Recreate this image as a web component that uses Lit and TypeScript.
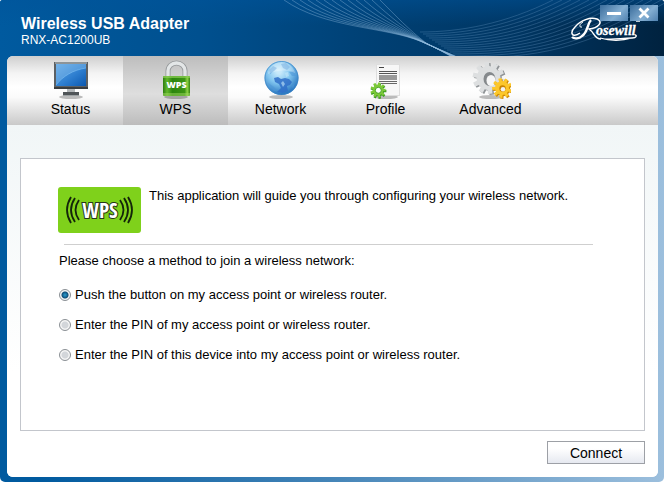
import { LitElement, html, css, svg } from "lit";
import { customElement, state } from "lit/decorators.js";

function gear(cx: number, cy: number, r: number, inner: number, teeth: number, turn = 0): string {
  const pts: string[] = [];
  const step = (Math.PI * 2) / teeth;
  const at = (a: number, rad: number) => `${(cx + Math.cos(a) * rad).toFixed(2)},${(cy + Math.sin(a) * rad).toFixed(2)}`;
  for (let i = 0; i < teeth; i++) {
    const a = i * step + turn;
    pts.push(at(a - step * 0.3, inner), at(a - step * 0.23, r), at(a + step * 0.23, r), at(a + step * 0.3, inner));
  }
  return pts.join(" ");
}

const shadow = svg`<ellipse cx="20" cy="38" rx="12" ry="2" fill="#000" opacity=".25"></ellipse>`;

const icons = {
  status: svg`
    <defs><linearGradient id="scr" x1="0" y1="0" x2="1" y2="1"><stop offset="0" stop-color="#64a8e4"/><stop offset=".55" stop-color="#2f7fd0"/><stop offset="1" stop-color="#0b58b0"/></linearGradient></defs>
    ${shadow}
    <rect x="3" y="3" width="34" height="27" fill="#5b6064"/>
    <rect x="4" y="3" width="32" height="2" fill="#8d9498"/>
    <rect x="5" y="5" width="30" height="22" fill="url(#scr)"/>
    <path d="M5 5 H35 V9 C22 11 12 17 5 26Z" fill="#8cc4f0" opacity=".4"/>
    <path d="M5 26 C12 17 22 11 35 9" fill="none" stroke="#7cc0f4" stroke-width=".6"/>
    <rect x="3" y="28" width="34" height="2" fill="#393d40"/>
    <rect x="16" y="30" width="8" height="3" fill="#b4b8ba"/>
    <rect x="12" y="33" width="16" height="3" fill="#505558"/>
    <rect x="12" y="36" width="16" height="1" fill="#9da2a4"/>`,
  wps: svg`
    <defs><linearGradient id="lock" x1="0" y1="0" x2="1" y2="0"><stop offset="0" stop-color="#2c7c12"/><stop offset=".15" stop-color="#62b82a"/><stop offset=".35" stop-color="#2c850f"/><stop offset=".8" stop-color="#3c9414"/><stop offset=".9" stop-color="#8bd243"/><stop offset="1" stop-color="#34820f"/></linearGradient></defs>
    ${shadow}
    <path d="M12 18 V12 a8.5 8 0 0 1 17 0 V18" fill="none" stroke="#96999b" stroke-width="5"/>
    <path d="M12 18 V12 a8.5 8 0 0 1 17 0 V18" fill="none" stroke="#e3e6e7" stroke-width="3.4"/>
    <rect x="7" y="17" width="27" height="20" rx="1" fill="url(#lock)"/>
    <rect x="7" y="17" width="27" height="2" fill="#8dcf55" opacity=".7"/>
    <rect x="7" y="34" width="27" height="3" fill="#a0d861" opacity=".5"/>
    <text x="20.5" y="29" text-anchor="middle" font-family="Open Sans, sans-serif" font-weight="800" font-size="9" fill="#fff">WPS</text>`,
  network: svg`
    <defs><radialGradient id="globe" cx=".42" cy=".3" r=".7"><stop offset="0" stop-color="#d9f2fd"/><stop offset=".5" stop-color="#81c5ef"/><stop offset="1" stop-color="#2572bd"/></radialGradient></defs>
    ${shadow}
    <circle cx="20.5" cy="19" r="17" fill="url(#globe)"/>
    <path d="M13 19 L17 18 L20 20 L24 19 L28 20 L31 23 L29 26 L26 27 L27 32 L22 34 L16 33 L20 29 L18 25 L14 23Z" fill="#2f6fc8" opacity=".85"/>
    <path d="M8 11 L12 7 L16 9 L13 12 L9 15Z M20 5 L25 4 L29 8 L26 11 L22 9Z M28 13 L33 12 L35 17 L31 17Z M7 24 L13 28 L16 32 L13 32Z M31 27 L34 24 L32 30Z" fill="#4c95d7" opacity=".55"/>
    <path d="M14 14 L18 11 L21 13 L19 16Z M24 14 L27 13 L28 17 L25 18Z M22 22 L24 25 L22 28 L20 24Z" fill="#c4e8fa" opacity=".6"/>
    <circle cx="20.5" cy="19" r="16.5" fill="none" stroke="#3f87c6" opacity=".7"/>
    <path d="M7 15 C8 7 15 3 21 3 C28 3 33 9 34 14 C26 10 16 11 7 15Z" fill="#fff" opacity=".28"/>`,
  profile: svg`
    ${shadow}
    <rect x="10.5" y="5.5" width="23" height="31" fill="#f7f7f7" stroke="#dedede"/>
    <path d="M13 8.5h5" stroke="#444"/>
    <path d="M13 12.5h18M13 14.5h18" stroke="#555"/>
    <rect x="13" y="16" width="18" height="5" fill="#999"/>
    <path d="M13 22.5h18M15 24.5h16" stroke="#666"/>
    <polygon points=${gear(12.5, 32, 8, 5.6, 9)} fill="#3c9b1f"/>
    <polygon points=${gear(12, 31, 7.6, 5.4, 9)} fill="#7cc938"/>
    <circle cx="12.3" cy="31.3" r="3" fill="#fff" stroke="#47a326"/>`,
  advanced: svg`
    ${shadow}
    <polygon points=${gear(19, 20, 16, 12, 10, 0.2)} fill="#8f9396"/>
    <polygon points=${gear(17.5, 19, 16, 12, 10, 0.2)} fill="#dddfe0"/>
    <ellipse cx="18.5" cy="20" rx="6" ry="7" fill="#85898c"/>
    <ellipse cx="20" cy="21.5" rx="4.5" ry="5.5" fill="#f6f6f6"/>
    <polygon points=${gear(32, 30, 10, 7.2, 9, 0.3)} fill="#cf8a05"/>
    <polygon points=${gear(31, 29, 10, 7, 9, 0.3)} fill="#fcc72b"/>
    <circle cx="31.5" cy="29.5" r="3.2" fill="#c98403"/>
    <circle cx="32" cy="30.2" r="2.3" fill="#f3f3f3"/>`,
};

type TabId = keyof typeof icons;

const tabs: { id: TabId; label: string }[] = [
  { id: "status", label: "Status" },
  { id: "wps", label: "WPS" },
  { id: "network", label: "Network" },
  { id: "profile", label: "Profile" },
  { id: "advanced", label: "Advanced" },
];

const methods = [
  "Push the button on my access point or wireless router.",
  "Enter the PIN of my access point or wireless router.",
  "Enter the PIN of this device into my access point or wireless router.",
];

const count = (n: number) => Array.from({ length: n }, (_, i) => i);

@customElement("app-root")
export class AppRoot extends LitElement {
  @state() private tab: TabId = "wps";
  @state() private method = 0;

  static styles = css`
    :host {
      display: block;
      font-family: "Liberation Sans", Arial, sans-serif;
      color: #000;
      background: #fff;
    }
    * { box-sizing: border-box; }
    svg { display: block; }
    .window {
      display: flex;
      flex-direction: column;
      min-height: calc(100vh - 1px);
      margin-right: 1px;
      border-radius: 3px 3px 5px 5px;
      overflow: hidden;
      background: linear-gradient(90deg, #005a9f 6%, #4585b8 50%, #9cbfdd 100%);
    }
    .header {
      position: relative;
      display: flex;
      justify-content: space-between;
      height: 56px;
      color: #fff;
      background:
        linear-gradient(180deg, rgba(0, 84, 155, 0.5), rgba(0, 84, 155, 0) 45%),
        linear-gradient(90deg, #005a9f 0, #00508f 30%, #003f72 58%, #003663 78%, #00223f 100%);
    }
    .waves {
      position: absolute;
      top: 0;
      right: 0;
      width: 394px;
      height: 56px;
    }
    .titles { padding: 15px 0 0 21px; }
    .title { margin: 0; font-size: 16px; line-height: 17px; font-weight: bold; }
    .model { margin: 0; font-size: 12px; line-height: 16px; }
    .logo { position: relative; margin: 15px 18px 0 0; width: 76px; height: 30px; }
    .controls {
      position: absolute;
      top: 5px;
      right: 6px;
      display: flex;
      gap: 2px;
    }
    .control {
      width: 28px;
      height: 16px;
      padding: 0;
      border: 0;
      display: grid;
      place-items: center;
      background: linear-gradient(135deg, #3a6c9b, #83aed2 60%, #4f81b0);
    }
    .panel {
      flex: 1;
      display: flex;
      flex-direction: column;
      margin: 0 6px 5px 7px;
      border-radius: 6px;
      overflow: hidden;
      background: #fff;
    }
    .tabs {
      display: flex;
      padding-left: 11px;
      background: linear-gradient(180deg, #cfcfcf 0, #f4f4f4 25%, #fff 45%, #fafafa 60%, #c9c9c9 100%);
    }
    .tab {
      display: flex;
      flex-direction: column;
      align-items: center;
      width: 105px;
      height: 69px;
      padding: 3px 0 0;
      border: 0;
      background: none;
      font: 14px/20px "Liberation Sans", Arial, sans-serif;
      color: #000;
    }
    .tab[aria-selected="true"] {
      background: linear-gradient(180deg, #bdbdbd 0, #d4d4d4 35%, #dedede 55%, #bcbcbc 100%);
    }
    .body {
      flex: 1;
      display: flex;
      flex-direction: column;
      padding: 33px 13px 13px;
      background: linear-gradient(180deg, #f1f6f7, #fff 70%);
    }
    .card {
      flex: 1;
      padding: 28px 37px;
      border: 1px solid #c3c6cc;
      background: #fff;
      font-size: 13px;
      line-height: 20px;
    }
    .intro { display: flex; gap: 8px; }
    .intro-text { margin: 0; line-height: 18px; }
    .rule { height: 1px; margin: 11px 14px 6px 6px; border: 0; background: #cfcfcf; }
    .methods { margin: 0; padding: 0 0 0 1px; border: 0; display: flex; flex-direction: column; gap: 10px; }
    .legend { padding: 0; margin-bottom: 14px; }
    .method { display: flex; align-items: center; gap: 4px; }
    .radio {
      appearance: none;
      width: 12px;
      height: 12px;
      margin: 0;
      border: 1px solid #8a8f94;
      border-radius: 50%;
      background: radial-gradient(circle, #d3d6da 0, #d3d6da 3px, #f6f6f6 4px);
    }
    .radio:checked {
      background: radial-gradient(circle at 50% 50%, #2a9fd0 0, #0d4f7c 3px, #12405f 3px, #f2f6f8 4px);
    }
    .actions { display: flex; justify-content: flex-end; padding-top: 10px; }
    .connect {
      width: 98px;
      height: 23px;
      padding: 0;
      border: 1px solid #9da0a6;
      background: linear-gradient(180deg, #fff 30%, #e6e9f0);
      font: 14px/20px "Liberation Sans", Arial, sans-serif;
      color: #000;
    }
  `;

  private waves() {
    return svg`
      ${count(13).map((i) => svg`<path d="M${14 + i * 8} 0 C${54 + i * 6} ${28 - i} ${115 + i * 2} ${27 + i / 4} ${150 + i / 2} ${41 + i / 6} Q${168} 49 ${190 - i / 2} 58" fill="none" stroke="#8fb8dc" stroke-width=".8" opacity=".5"/>`)}
      ${count(14).map((i) => svg`<path d="M${150 + i * 3} ${32 + i * 2} C${190 + i * 6} ${32 + i * 2} ${235 + i * 6} ${24 + i * 2} ${283 + i * 9} 0" fill="none" stroke="#6d9cc6" stroke-width=".7" opacity=".45"/>`)}`;
  }

  private logo() {
    return html`<svg class="logo" viewBox="0 0 76 30" role="img" aria-label="Rosewill">
      <path d="M10 18 C1 24 0 17 5 12 C11 5 20 2 27 4 C34 7 28 13 19 14 C25 18 24 24 31 24" fill="none" stroke="#fff" stroke-width="1.5"/>
      <path d="M21 5 C17 9 18 17 12 21 C9 24 4 24 2 22" fill="none" stroke="#fff" stroke-width="2.4"/>
      <path d="M12 12 C9 13 9 9 13 7" fill="none" stroke="#fff" stroke-width="1"/>
      <path d="M30 23 C40 26 50 23 62 23 C67 23 67 20 65 20 M62 23 C52 26 40 26 30 23" fill="none" stroke="#fff" stroke-width="1.3"/>
      <path d="M66 6h4" stroke="#fff" stroke-width="1.5"/>
      <text x="26" y="20" font-family="Liberation Serif, Times New Roman, serif" font-style="italic" font-weight="bold" font-size="14" fill="#fff" stroke="#fff" stroke-width=".3">osewill</text>
    </svg>`;
  }

  private badge() {
    return html`<svg width="83" height="46" viewBox="0 0 83 46" role="img" aria-label="WPS">
      <rect width="83" height="46" rx="3" fill="#7fd11b"/>
      <g fill="none" stroke="#14250a" stroke-width="1.8">
        <path d="M13 10 Q5 23 13 36M17 11 Q9 23 17 35M21 13 Q14 23 21 33"/>
        <path d="M70 10 Q78 23 70 36M66 11 Q74 23 66 35M62 13 Q69 23 62 33"/>
      </g>
      <text x="42" y="31" text-anchor="middle" font-family="Liberation Sans Narrow, Open Sans Condensed, DejaVu Sans Condensed, sans-serif" font-weight="bold" font-size="21" fill="#fff" stroke="#26361c" stroke-width="2" paint-order="stroke">WPS</text>
    </svg>`;
  }

  render() {
    return html`
      <div class="window">
        <header class="header">
          <svg class="waves" viewBox="0 0 394 56" aria-hidden="true">${this.waves()}</svg>
          <div class="titles">
            <h1 class="title">Wireless USB Adapter</h1>
            <p class="model">RNX-AC1200UB</p>
          </div>
          ${this.logo()}
          <div class="controls">
            <button class="control" aria-label="Minimize">
              <svg width="14" height="12" viewBox="0 0 14 12"><path d="M0 6.5h14" stroke="#fff" stroke-width="3"/></svg>
            </button>
            <button class="control" aria-label="Close">
              <svg width="12" height="12" viewBox="0 0 12 12"><path d="M1.5 1.5l9 9M10.5 1.5l-9 9" stroke="#fff" stroke-width="2.8"/></svg>
            </button>
          </div>
        </header>
        <main class="panel">
          <div class="tabs" role="tablist">
            ${tabs.map((t) => html`
              <button class="tab" role="tab" aria-selected=${this.tab === t.id} @click=${() => (this.tab = t.id)}>
                <svg width="40" height="40" viewBox="0 0 40 40" aria-hidden="true">${icons[t.id]}</svg>
                <span>${t.label}</span>
              </button>`)}
          </div>
          <div class="body">
            <section class="card">
              <div class="intro">
                ${this.badge()}
                <p class="intro-text">This application will guide you through configuring your wireless network.</p>
              </div>
              <hr class="rule" />
              <fieldset class="methods">
                <legend class="legend">Please choose a method to join a wireless network:</legend>
                ${methods.map((m, i) => html`
                  <label class="method">
                    <input class="radio" type="radio" name="method" .checked=${this.method === i} @change=${() => (this.method = i)} />
                    <span>${m}</span>
                  </label>`)}
              </fieldset>
            </section>
            <div class="actions"><button class="connect">Connect</button></div>
          </div>
        </main>
      </div>`;
  }
}
